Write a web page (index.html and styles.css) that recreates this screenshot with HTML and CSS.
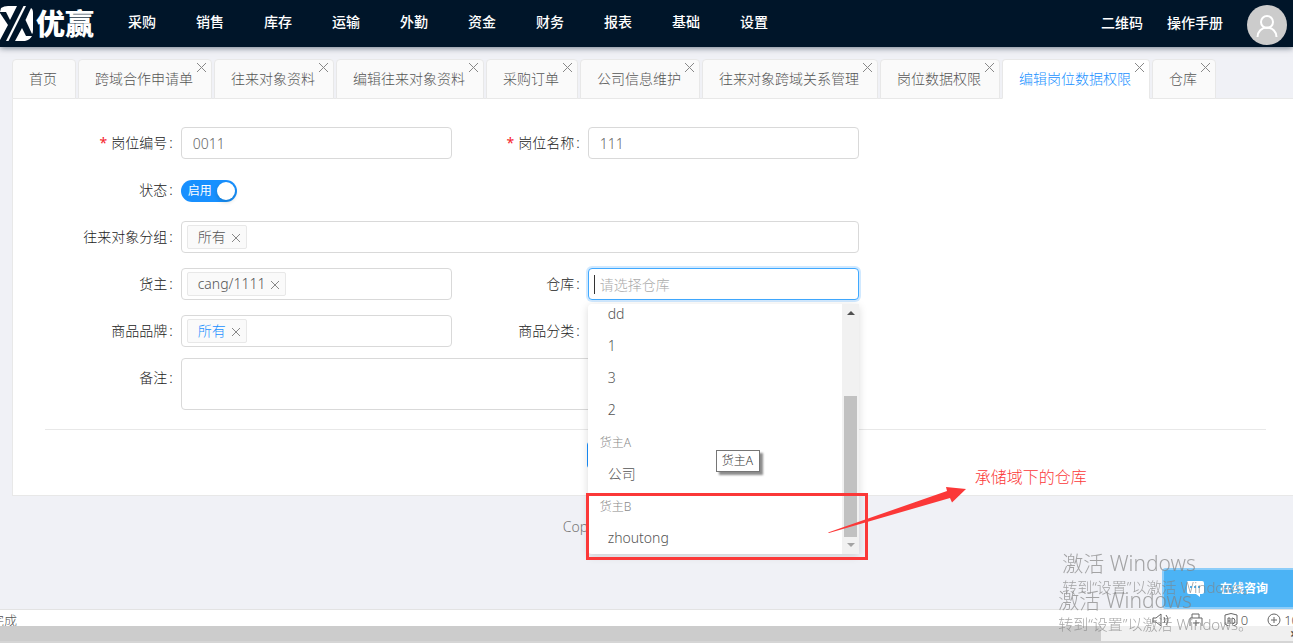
FILE: index.html
```html
<!DOCTYPE html>
<html lang="zh-CN">
<head>
<meta charset="utf-8">
<title>编辑岗位数据权限</title>
<link rel="stylesheet" href="styles.css">
</head>
<body>
<header class="topbar">
  <a class="logo" href="#">
    <svg class="logo-mark" viewBox="0 0 34 36" aria-hidden="true">
      <path d="M1 2 Q4 0 8 0 H17 L10 14 L6 6 H0 Z"/>
      <path d="M0 7 L8 19 L0 34 Z"/>
      <path d="M23.500 0 H26 L8.500 35 H6 Z"/>
      <path d="M25.500 14 L31 2 Q33 3 33 7 V24 Q33 27 32 28 Z"/>
      <path d="M22 22 L26 30 H32 Q30 34 25 35 H15 Z"/>
    </svg>
    <span class="logo-text">优赢</span>
  </a>
  <nav class="menu">
    <a href="#">采购</a><a href="#">销售</a><a href="#">库存</a><a href="#">运输</a><a href="#">外勤</a><a href="#">资金</a><a href="#">财务</a><a href="#">报表</a><a href="#">基础</a><a href="#">设置</a>
  </nav>
  <div class="account">
    <a href="#">二维码</a>
    <a href="#">操作手册</a>
    <button class="avatar" type="button" aria-label="账户">
      <svg viewBox="0 0 40 40" aria-hidden="true"><circle cx="20" cy="17" r="6"/><path d="M10.500 32 a9.500 9.500 0 0 1 19 0"/></svg>
    </button>
  </div>
</header>

<main class="content">
  <div class="tabs">
    <div class="tab"><a href="#">首页</a></div>
    <div class="tab"><a href="#">跨域合作申请单</a><button class="tab-close" type="button" aria-label="关闭"></button></div>
    <div class="tab"><a href="#">往来对象资料</a><button class="tab-close" type="button" aria-label="关闭"></button></div>
    <div class="tab"><a href="#">编辑往来对象资料</a><button class="tab-close" type="button" aria-label="关闭"></button></div>
    <div class="tab"><a href="#">采购订单</a><button class="tab-close" type="button" aria-label="关闭"></button></div>
    <div class="tab"><a href="#">公司信息维护</a><button class="tab-close" type="button" aria-label="关闭"></button></div>
    <div class="tab"><a href="#">往来对象跨域关系管理</a><button class="tab-close" type="button" aria-label="关闭"></button></div>
    <div class="tab"><a href="#">岗位数据权限</a><button class="tab-close" type="button" aria-label="关闭"></button></div>
    <div class="tab active"><a href="#">编辑岗位数据权限</a><button class="tab-close" type="button" aria-label="关闭"></button></div>
    <div class="tab"><a href="#">仓库</a><button class="tab-close" type="button" aria-label="关闭"></button></div>
  </div>

  <form class="panel">
    <div class="fields">
      <div class="field">
        <label class="required" for="code">岗位编号</label>
        <input class="box" id="code" type="text" value="0011">
      </div>
      <div class="field">
        <label class="required" for="name">岗位名称</label>
        <input class="box" id="name" type="text" value="111">
      </div>
      <div class="field wide">
        <label for="status">状态</label>
        <div class="switch">
          <input id="status" type="checkbox" checked>
          <span class="switch-text">启用</span>
        </div>
      </div>
      <div class="field wide">
        <label for="group">往来对象分组</label>
        <div class="box tags">
          <span class="tag">所有<button type="button" aria-label="移除"></button></span>
          <input id="group" type="text">
        </div>
      </div>
      <div class="field">
        <label for="owner">货主</label>
        <div class="box tags">
          <span class="tag">cang/1111<button type="button" aria-label="移除"></button></span>
          <input id="owner" type="text">
        </div>
      </div>
      <div class="field">
        <label for="warehouse">仓库</label>
        <div class="combo">
          <input class="box focused" id="warehouse" type="text" placeholder="请选择仓库">
          <span class="caret"></span>
          <div class="dropdown">
            <ul class="options">
              <li class="option">dd</li>
              <li class="option">1</li>
              <li class="option">3</li>
              <li class="option">2</li>
              <li class="option-group">货主A</li>
              <li class="option">公司</li>
              <li class="option-group">货主B</li>
              <li class="option">zhoutong</li>
            </ul>
            <div class="scroll">
              <span class="scroll-up"></span>
              <span class="scroll-thumb"></span>
              <span class="scroll-down"></span>
            </div>
            <div class="tooltip">货主A</div>
            <div class="mark-frame"></div>
            <svg class="mark-arrow" viewBox="0 0 140 52" aria-hidden="true"><path d="M0 48.500 L119 7 L118 3 L138 5 L124 18.500 L122 14 L1 49 Z"/></svg>
            <div class="mark-text">承储域下的仓库</div>
          </div>
        </div>
      </div>
      <div class="field">
        <label for="brand">商品品牌</label>
        <div class="box tags">
          <span class="tag linked">所有<button type="button" aria-label="移除"></button></span>
          <input id="brand" type="text">
        </div>
      </div>
      <div class="field">
        <label for="category">商品分类</label>
        <input class="box" id="category" type="text">
      </div>
      <div class="field wide notes">
        <label for="notes">备注</label>
        <textarea class="box" id="notes"></textarea>
      </div>
    </div>
    <div class="actions">
      <button class="primary" type="submit" aria-label="保存"></button>
      <button type="button" aria-label="返回"></button>
    </div>
  </form>
  <footer class="copyright">Copyright</footer>
</main>

<button class="chat" type="button">
  <svg viewBox="0 0 18 18" aria-hidden="true"><path class="bubble" d="M2 1 H16 Q18 1 18 3 V12 Q18 14 16 14 H14 V17 L10 14 H3 Q1 14 1 12 V3 Q1 1 2 1 Z"/><path class="dots" d="M4 7 h2 M8 7 h2 M12 7 h2"/></svg>
  <span>在线咨询</span>
</button>

<div class="statusbar">
  <span class="state">完成</span>
  <div class="tools">
    <svg viewBox="0 0 18 16" aria-hidden="true"><path d="M1 6 H4 L9 2 V14 L4 10 H1 Z M12 5 q2 3 0 6 M14 3 q4 5 0 10"/></svg>
    <svg viewBox="0 0 18 16" aria-hidden="true"><path d="M5 6 V2 H12 V6 M3 15 V6 H15 V15 M9 8 V14 M6 11 H12"/></svg>
    <span class="tool"><svg viewBox="0 0 18 16" aria-hidden="true"><path d="M3 3 Q9 0 15 3 V12 Q9 17 3 12 Z M6 12 V6 H8 V12 M6 9 H8 M10 6 V12 Q13 12 13 9 Q13 6 10 6"/></svg>0</span>
    <span class="tool"><svg viewBox="0 0 18 16" aria-hidden="true"><circle cx="9" cy="8" r="6"/><path d="M9 5 V11 M6 8 H12"/></svg>100%</span>
  </div>
</div>
<div class="hscroll"><span class="hscroll-thumb"></span><span class="hscroll-end">×</span></div>

<div class="watermark first"><strong>激活 Windows</strong><span>转到“设置”以激活 Windows。</span></div>
<div class="watermark second"><strong>激活 Windows</strong><span>转到“设置”以激活 Windows。</span></div>
</body>
</html>
```
FILE: styles.css
```css
* { box-sizing: border-box; }

body {
  margin: 0;
  min-height: 100vh;
  display: flex;
  flex-direction: column;
  overflow: hidden;
  background: #f0f1f6;
  color: #555;
  font: 300 14px/20px "Noto Sans", "Noto Sans CJK SC", sans-serif;
}

button, input, textarea { font: inherit; color: inherit; }
button { padding: 0; border: 0; background: none; }
a { color: inherit; text-decoration: none; }

.topbar {
  height: 47px;
  display: flex;
  align-items: center;
  background: #001529;
  color: #fff;
  box-shadow: 0 1px 6px rgba(0, 21, 41, .55);
}
.logo { width: 108px; display: flex; align-items: center; gap: 2px; }
.logo-mark { width: 34px; height: 36px; fill: #fff; }
.logo-text { font-size: 29px; font-weight: 900; line-height: 40px; }
.menu { display: flex; flex: 1; font-weight: 500; padding-bottom: 4px; }
.menu a { padding: 0 20px; }
.account { display: flex; align-items: center; gap: 24px; padding-right: 6px; font-weight: 500; }
.account a { padding-bottom: 2px; }
.avatar { width: 40px; height: 40px; border-radius: 50%; background: #ccc; margin-top: 3px; }
.avatar svg { display: block; fill: none; stroke: #fff; stroke-width: 2; }

.content { flex: 1; padding-left: 12px; }
.tabs { display: flex; gap: 2px; padding-top: 12px; }
.tab {
  position: relative;
  height: 40px;
  margin-bottom: -1px;
  padding: 0 18px 0 16px;
  border: 1px solid #e8e8e8;
  border-radius: 4px 4px 0 0;
  background: #fafafa;
  line-height: 38px;
  white-space: nowrap;
}
.tab.active { background: #fff; color: #1890ff; border-bottom-color: #fff; }
.tab-close { position: absolute; top: 3px; right: 5px; width: 9px; height: 9px; }
.tab-close, .tag button {
  background:
    linear-gradient(45deg, transparent 45%, #888 45%, #888 55%, transparent 55%),
    linear-gradient(-45deg, transparent 45%, #888 45%, #888 55%, transparent 55%);
}

.panel {
  padding: 28px 27px 26px 32px;
  border: 1px solid #e8e8e8;
  border-right: 0;
  background: #fff;
}
.fields { width: 66.667%; display: grid; grid-template-columns: 1fr 1fr; row-gap: 15px; }
.field { display: grid; grid-template-columns: 1fr 2fr; min-height: 32px; }
.field.wide { grid-column: 1 / -1; grid-template-columns: 1fr 5fr; }
.field label { padding-right: 8px; line-height: 32px; text-align: right; color: #222; white-space: nowrap; }
.field label::after { content: ":"; margin-left: 2px; }
.required::before { content: "*"; margin-right: 4px; color: #f5222d; font-weight: 400; }

.box {
  width: 100%;
  min-width: 0;
  height: 32px;
  padding: 0 11px;
  border: 1px solid #d9d9d9;
  border-radius: 4px;
  background: #fff;
  outline: 0;
  color: #666;
}
.box::placeholder { color: #aaa; opacity: 1; }
.box.focused { border-color: #40a9ff; box-shadow: 0 0 0 2px rgba(24, 144, 255, .2); }
.notes { margin-top: -4px; }
.notes label { padding-top: 4px; }
textarea.box { display: block; height: 52px; resize: none; }

.switch { position: relative; align-self: center; width: 56px; height: 22px; margin-top: 2px; }
.switch input { display: block; appearance: none; width: 56px; height: 22px; margin: 0; border-radius: 11px; background: #1890ff; }
.switch input::after {
  content: "";
  position: absolute;
  top: 2px;
  right: 2px;
  width: 18px;
  height: 18px;
  border-radius: 50%;
  background: #fff;
  box-shadow: 0 2px 4px rgba(0, 35, 11, .2);
}
.switch-text { position: absolute; left: 7px; top: 1px; color: #fff; font-size: 12px; font-weight: 400; pointer-events: none; }

.tags { display: flex; align-items: center; padding: 0 5px; }
.tags input { flex: 1; min-width: 0; border: 0; outline: 0; background: none; }
.tag {
  display: flex;
  align-items: center;
  gap: 6px;
  height: 24px;
  padding: 0 6px 0 10px;
  border: 1px solid #e8e8e8;
  border-radius: 2px;
  background: #fafafa;
  color: #555;
}
.tag button { width: 8px; height: 8px; margin-top: 2px; }
.tag.linked { color: #1890ff; }

.combo { position: relative; }
.caret { position: absolute; left: 6px; top: 7px; width: 1px; height: 19px; background: #333; }
.dropdown {
  position: absolute;
  z-index: 2;
  top: 36px;
  left: 0;
  width: 100%;
  height: 250px;
  display: flex;
  border-radius: 4px;
  background: #fff;
  box-shadow: 0 2px 8px rgba(0, 0, 0, .15);
}
.options {
  flex: 1;
  display: flex;
  flex-direction: column;
  justify-content: flex-end;
  margin: 0;
  padding: 0;
  overflow: hidden;
  list-style: none;
}
.option, .option-group { flex: none; height: 32px; padding: 0 20px; line-height: 32px; color: #555; }
.option-group { padding: 1px 12px 0; font-size: 12px; color: #888; }
.scroll { width: 17px; display: flex; flex-direction: column; align-items: center; background: #f1f1f1; }
.scroll-up, .scroll-down { border: 4px solid transparent; }
.scroll-up { margin-top: 3px; border-bottom-color: #505050; }
.scroll-down { margin: 6px 0 3px; border-top-color: #a3a3a3; }
.scroll-thumb { flex: none; width: 13px; height: 141px; margin-top: auto; background: #c1c1c1; }

.tooltip {
  position: absolute;
  top: 146px;
  left: 128px;
  padding: 0 6px 0 5px;
  border: 1px solid #767676;
  background: #fff;
  box-shadow: 3px 3px 2px rgba(0, 0, 0, .45);
  color: #333;
  font-size: 12px;
  white-space: nowrap;
}
.mark-frame { position: absolute; top: 189px; left: -2px; right: -9px; height: 67px; border: 3px solid #fb3838; }
.mark-arrow { position: absolute; top: 180px; left: 240px; width: 140px; height: 52px; fill: #fb3838; }
.mark-text { position: absolute; top: 163px; left: 387px; color: #fb3838; font-size: 16px; white-space: nowrap; }

.actions {
  display: flex;
  justify-content: center;
  gap: 8px;
  margin-top: 19px;
  padding-top: 11px;
  border-top: 1px solid #e8e8e8;
}
.actions button { width: 65px; height: 28px; border: 1px solid #d9d9d9; border-radius: 4px; background: #fff; }
.actions .primary { border-color: #1890ff; background: #1890ff; }
.copyright { padding: 21px 0 0 43%; color: #777; }

.chat {
  position: fixed;
  right: 0;
  bottom: 34px;
  width: 131px;
  height: 41px;
  display: flex;
  align-items: center;
  gap: 16px;
  padding-left: 22px;
  border: 2px solid #8ccdf9;
  border-right: 0;
  border-radius: 4px 0 0 4px;
  background: #4bb3f5;
  color: #fff;
  font-size: 12px;
  font-weight: 700;
}
.chat svg { width: 18px; height: 18px; }
.bubble { fill: #fff; }
.dots { stroke: #4bb3f5; stroke-width: 2; }

.statusbar {
  height: 17px;
  display: flex;
  justify-content: space-between;
  overflow: hidden;
  border-top: 1px solid #e3e3e3;
  background: #fff;
  font-size: 13px;
}
.state { margin-left: -9px; }
.tools { display: flex; gap: 17px; margin-right: -24px; }
.tools svg { width: 18px; height: 16px; margin-top: 2px; fill: none; stroke: #666; }
.tool { display: flex; gap: 1px; }
.hscroll {
  height: 17px;
  display: flex;
  justify-content: space-between;
  overflow: hidden;
  border-bottom: 2px solid #d5d5d5;
  background: #f0f0f0;
}
.hscroll-thumb { width: 85.151%; background: #ccc; }
.hscroll-end { margin-right: -5px; font-weight: 700; line-height: 15px; }

.watermark {
  position: fixed;
  z-index: 3;
  display: flex;
  flex-direction: column;
  color: rgba(130, 130, 130, .7);
  white-space: nowrap;
  pointer-events: none;
}
.watermark strong { font-size: 21px; font-weight: 300; line-height: 24px; }
.watermark span { font-size: 15px; line-height: 24px; }
.first { right: 36px; bottom: 44px; }
.second { right: 40px; bottom: 7px; }
```
